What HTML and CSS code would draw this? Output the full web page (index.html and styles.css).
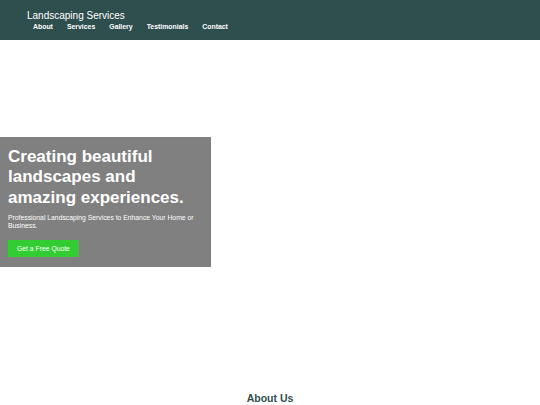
FILE: index.html
```html
<!DOCTYPE html>
<html lang="en">
<head>
<meta charset="utf-8">
<title>Landscaping Services</title>
<link rel="stylesheet" href="styles.css">
</head>
<body>
<header class="site-header">
  <div class="brand">Landscaping Services</div>
  <nav class="main-nav">
    <a href="#">About</a>
    <a href="#">Services</a>
    <a href="#">Gallery</a>
    <a href="#">Testimonials</a>
    <a href="#">Contact</a>
  </nav>
</header>
<section class="hero">
  <div class="hero-box">
    <h1 class="hero-title">Creating beautiful landscapes and amazing experiences.</h1>
    <p class="hero-text">Professional Landscaping Services to Enhance Your Home or Business.</p>
    <a class="btn" href="#">Get a Free Quote</a>
  </div>
</section>
<section class="about">
  <h2 class="section-title">About Us</h2>
</section>
</body>
</html>
```
FILE: styles.css
```css
* { box-sizing: border-box; }
html, body { margin: 0; padding: 0; }
body {
  font-family: "Liberation Sans", Arial, sans-serif;
  background: #ffffff;
  color: #333;
}
.site-header {
  background: #2f4f4f;
  color: #fff;
  height: 40px;
  padding: 10px 27px 0;
}
.brand {
  font-size: 10px;
  line-height: 11.5px;
}
.main-nav {
  display: flex;
  gap: 14px;
  margin: 1px 0 0 6px;
}
.main-nav a {
  color: #ffffff;
  text-decoration: none;
  font-weight: bold;
  font-size: 6.9px;
  line-height: 8px;
}
.hero {
  padding: 97px 0;
}
.hero-box {
  width: 211px;
  background: #808080;
  color: #fff;
  padding: 10px 8px;
  display: flex;
  flex-direction: column;
  align-items: flex-start;
}
.hero-title {
  margin: 0 0 6px;
  font-size: 17px;
  line-height: 20.4px;
  font-weight: bold;
}
.hero-text {
  margin: 0 0 10px;
  font-size: 6.8px;
  line-height: 8px;
}
.btn {
  display: block;
  background: #32cd32;
  color: #fff;
  text-decoration: none;
  font-size: 6.8px;
  line-height: 17px;
  height: 17px;
  padding: 0 9px;
}
.about {
  padding-top: 28px;
  text-align: center;
}
.section-title {
  margin: 0;
  font-size: 10.5px;
  line-height: 12px;
  color: #2f4f4f;
  font-weight: bold;
}
```
